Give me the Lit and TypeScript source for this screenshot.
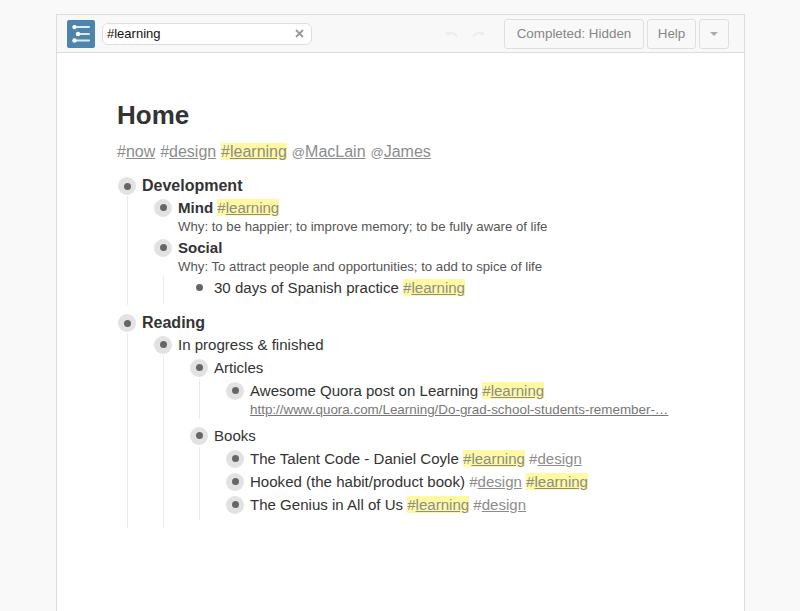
import { LitElement, html, css, TemplateResult } from "lit";
import { customElement } from "lit/decorators.js";

const tag = (pre: string, word: string, hit = false, at = false) =>
  html`<span class="tag ${hit ? "hit" : ""}"><span class="${at ? "at" : ""}">${pre}</span><u>${word}</u></span>`;
const L = tag("#", "learning", true);
const D = tag("#", "design");

@customElement("app-root")
export class AppRoot extends LitElement {
  static styles = css`
    :host {
      display: block;
      height: 611px;
      box-sizing: border-box;
      padding: 14px 55px 0 56px;
      background: #f9f9f9;
      font-family: "Liberation Sans", Arial, sans-serif;
      color: #333;
      overflow: hidden;
    }
    .win {
      height: 100%;
      box-sizing: border-box;
      background: #fff;
      border: 1px solid #dcdcdc;
      border-bottom: 0;
      display: flex;
      flex-direction: column;
    }
    .bar {
      height: 38px;
      flex: none;
      box-sizing: border-box;
      background: #f8f8f8;
      border-bottom: 1px solid #dcdcdc;
      display: flex;
      align-items: center;
      padding-left: 10px;
      padding-right: 15px;
    }
    .logo {
      width: 28px;
      height: 28px;
      background: #4c84ad;
      border-radius: 2px;
      display: block;
      margin-right: 7px;
    }
    .search {
      width: 210px;
      height: 22px;
      box-sizing: border-box;
      background: #fff;
      border: 1px solid #dedede;
      border-radius: 6px;
      display: flex;
      align-items: center;
      justify-content: space-between;
      padding: 0 7px 0 4px;
      font-size: 13px;
      color: #111;
    }
    .clear { width: 9px; height: 9px; display: block; }
    .hist { display: flex; gap: 12px; margin-left: auto; margin-right: 15px; }
    .hist svg { width: 15px; height: 10px; display: block; }
    .btn {
      height: 30px;
      box-sizing: border-box;
      background: #f8f8f8;
      border: 1px solid #dedede;
      border-radius: 3px;
      display: flex;
      align-items: center;
      justify-content: center;
      font-size: 13.4px;
      color: #868686;
      margin-left: 3px;
    }
    .b1 { width: 140px; }
    .b2 { width: 49px; }
    .b3 { width: 30px; }
    .caret {
      width: 0;
      height: 0;
      border-left: 4px solid transparent;
      border-right: 4px solid transparent;
      border-top: 4px solid #aaa;
    }
    .page { padding: 46px 60px 0 60px; }
    h1 {
      margin: 0;
      font-size: 26px;
      line-height: 32px;
      font-weight: bold;
      color: #333;
    }
    .tags {
      font-size: 16px;
      line-height: 20px;
      margin: 11px 0 13px;
      color: #888;
      word-spacing: 0.4px;
    }
    .tree { padding-left: 1px; }
    .tag { color: #8c8c8c; }
    .tag u { text-decoration: underline; }
    .at { font-size: 0.82em; }
    .hit { background: #fff9a3; }
    .item { position: relative; }
    .row {
      display: flex;
      align-items: center;
      height: 23px;
      font-size: 15.05px;
      white-space: nowrap;
    }
    .top > .row { font-size: 16px; font-weight: bold; height: 20px; }
    .dot {
      width: 18px;
      height: 18px;
      flex: none;
      border-radius: 50%;
      background: #e2e2e2;
      margin-right: 6px;
      display: flex;
      align-items: center;
      justify-content: center;
    }
    .dot::after {
      content: "";
      width: 7px;
      height: 7px;
      border-radius: 50%;
      background: #666;
    }
    .leaf { background: transparent; }
    .note {
      margin-left: 24px;
      font-size: 13.2px;
      line-height: 15px;
      height: 17px;
      color: #555;
      white-space: nowrap;
    }
    .url {
      display: block;
      margin-left: 24px;
      font-size: 13.4px;
      line-height: 15px;
      height: 17px;
      color: #777;
      text-decoration: underline;
      white-space: nowrap;
    }
    .kids {
      margin-left: 9px;
      padding-left: 26px;
      border-left: 1px solid #ebebeb;
    }
    .pb1 > .kids { padding-bottom: 1px; }
    .pb5 > .kids { padding-bottom: 5px; }
    .pb4 > .kids { padding-bottom: 4px; }
    .pb8 > .kids { padding-bottom: 8px; }
    .next { margin-top: 8px; }
    .gap { margin-top: 5px; }
  `;

  private item(
    content: unknown,
    opts: { cls?: string; note?: TemplateResult; kids?: TemplateResult; leaf?: boolean } = {}
  ) {
    return html`<div class="item ${opts.cls ?? ""}">
      <div class="row">
        <span class="dot ${opts.leaf ? "leaf" : ""}"></span><span class="txt">${content}</span>
      </div>
      ${opts.note ?? ""}
      ${opts.kids ? html`<div class="kids">${opts.kids}</div>` : ""}
    </div>`;
  }

  render() {
    return html`<div class="win">
      <div class="bar">
        <svg class="logo" viewBox="0 0 28 28" fill="#fff">
          <rect x="6" y="6.100" width="17" height="2" rx="1" fill="#dfe9f1"/>
          <circle cx="7.500" cy="7.100" r="2.200"/>
          <rect x="9" y="13" width="14" height="2" rx="1" fill="#dfe9f1"/>
          <circle cx="11" cy="14" r="2.200"/>
          <rect x="6" y="19.500" width="17" height="2" rx="1" fill="#dfe9f1"/>
          <circle cx="7.500" cy="20.500" r="2.200"/>
        </svg>
        <div class="search">
          <span>#learning</span>
          <svg class="clear" viewBox="0 0 9 9" stroke="#9a9a9a" stroke-width="1.8" fill="none">
            <path d="M1 1 8 8M8 1 1 8"/>
          </svg>
        </div>
        <div class="hist">
          <svg viewBox="0 0 15 10" fill="none" stroke="#ececec" stroke-width="2">
            <path d="M13 8C12 4.500 8 3 3.500 4.500"/><path d="M1 5 5 1.500V7Z" fill="#ececec" stroke="none"/>
          </svg>
          <svg viewBox="0 0 15 10" fill="none" stroke="#ececec" stroke-width="2">
            <path d="M2 8C3 4.500 7 3 11.500 4.500"/><path d="M14 5 10 1.500V7Z" fill="#ececec" stroke="none"/>
          </svg>
        </div>
        <div class="btn b1">Completed: Hidden</div>
        <div class="btn b2">Help</div>
        <div class="btn b3"><span class="caret"></span></div>
      </div>
      <div class="page">
        <h1>Home</h1>
        <div class="tags">
          ${tag("#", "now")} ${D} ${L} ${tag("@", "MacLain", false, true)} ${tag("@", "James", false, true)}
        </div>
        <div class="tree">
          ${this.item("Development", {
            cls: "top pb1",
            kids: html`
              ${this.item(html`<b>Mind</b> ${L}`, {
                note: html`<div class="note">Why: to be happier; to improve memory; to be fully aware of life</div>`,
              })}
              ${this.item(html`<b>Social</b>`, {
                cls: "pb5",
                note: html`<div class="note">Why: To attract people and opportunities; to add to spice of life</div>`,
                kids: html`${this.item(html`30 days of Spanish practice ${L}`, { leaf: true })}`,
              })}
            `,
          })}
          <div class="next">
            ${this.item("Reading", {
              cls: "top",
              kids: html`
                ${this.item("In progress & finished", {
                  cls: "pb8",
                  kids: html`
                    ${this.item("Articles", {
                      kids: html`${this.item(html`Awesome Quora post on Learning ${L}`, {
                        note: html`<a class="url">http://www.quora.com/Learning/Do-grad-school-students-remember-…</a>`,
                      })}`,
                    })}
                    <div class="gap">
                      ${this.item("Books", {
                        cls: "pb4",
                        kids: html`
                          ${this.item(html`The Talent Code - Daniel Coyle ${L} ${D}`)}
                          ${this.item(html`Hooked (the habit/product book) ${D} ${L}`)}
                          ${this.item(html`The Genius in All of Us ${L} ${D}`)}
                        `,
                      })}
                    </div>
                  `,
                })}
              `,
            })}
          </div>
        </div>
      </div>
    </div>`;
  }
}
